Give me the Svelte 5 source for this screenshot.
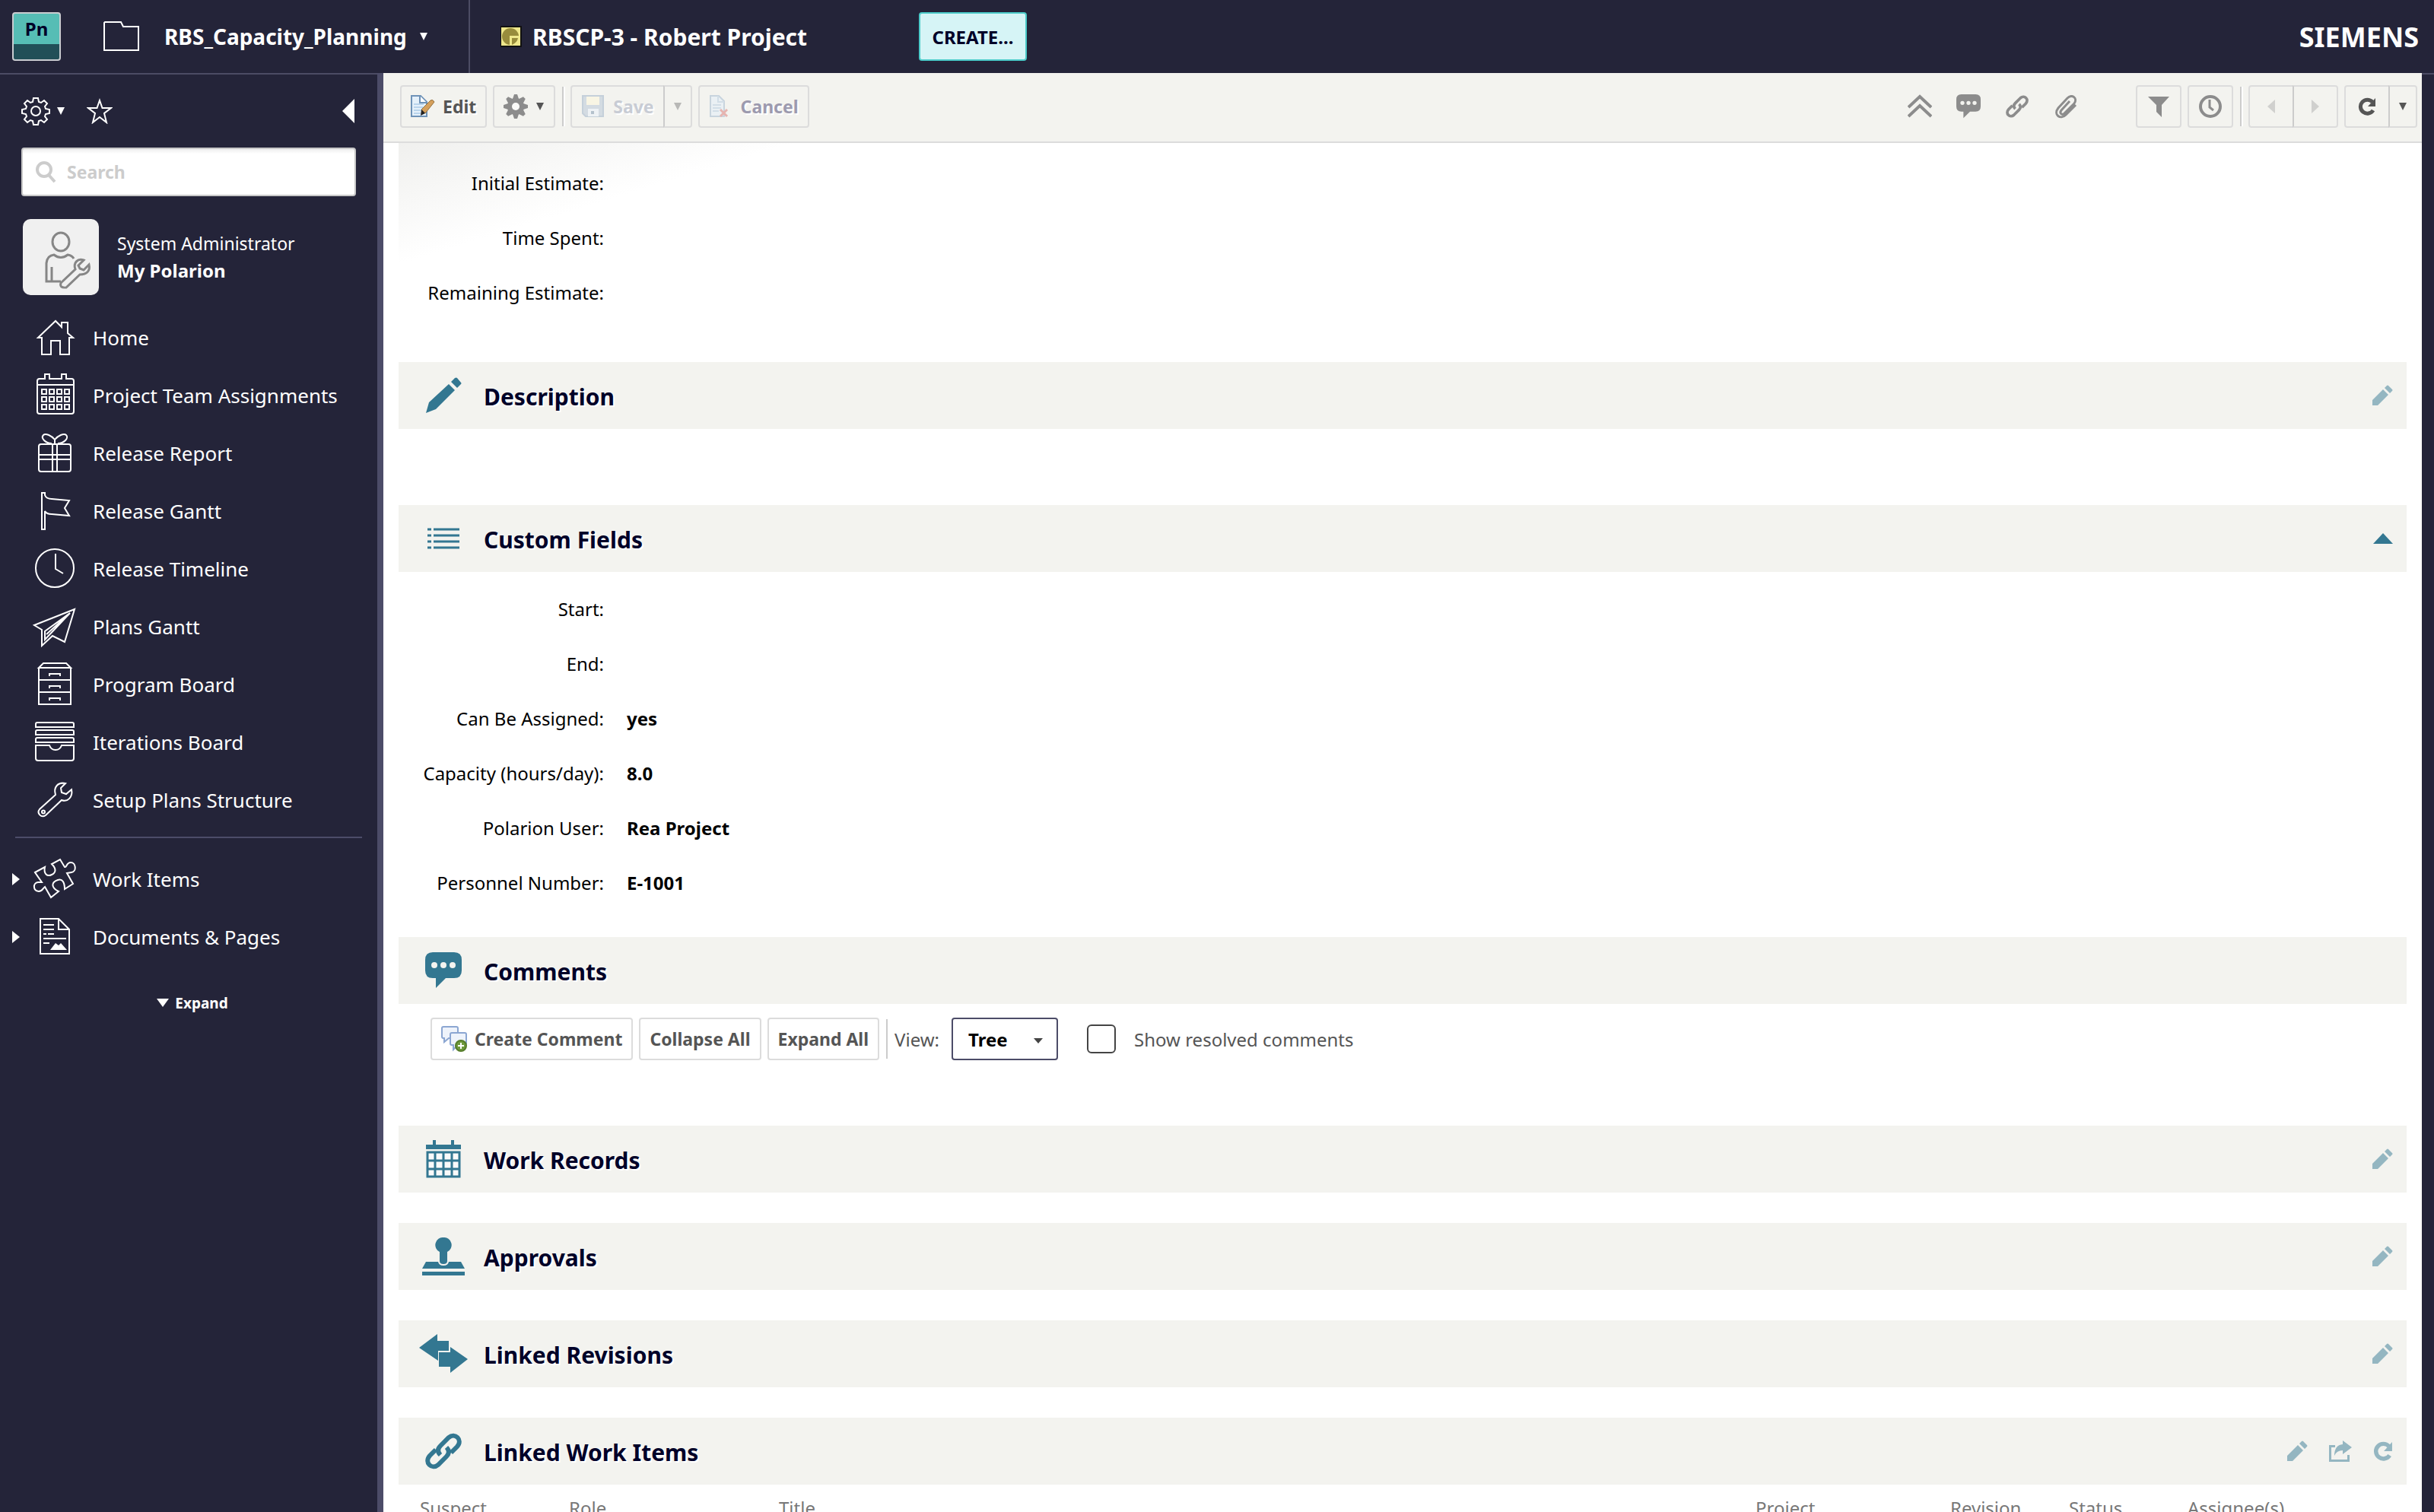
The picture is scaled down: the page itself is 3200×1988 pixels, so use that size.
<script>
  let search = $state('');
  let view = $state('Tree');
  let showResolved = $state(false);
  let fieldsOpen = $state(true);

  // Icons are drawn on a 60x60 grid; `solid` is the filled part.
  const NAV = [
    {
      label: 'Home',
      d: 'M8 30L31 8L39 16V10H47V24L54 30H49V52H37V34H25V52H13V30Z',
    },
    {
      label: 'Project Team Assignments',
      d: 'M10 8H17V2H23V8H39V2H45V8H52Q55 8 55 11V51Q55 54 52 54H10Q7 54 7 51V11Q7 8 10 8ZM7 16H55M13 22h6v6h-6zM23 22h6v6h-6zM33 22h6v6h-6zM43 22h6v6h-6zM13 32h6v6h-6zM23 32h6v6h-6zM33 32h6v6h-6zM43 32h6v6h-6zM13 42h6v6h-6zM23 42h6v6h-6zM33 42h6v6h-6zM43 42h6v6h-6z',
    },
    {
      label: 'Release Report',
      d: 'M12 18H48Q51 18 51 21V51Q51 54 48 54H12Q9 54 9 51V21Q9 18 12 18ZM27 18V54M33 18V54M9 32H51M9 38H51M30 17V12C26 7 18 3 15 6C11 10 18 17 26 17M30 12C34 7 42 3 45 6C49 10 42 17 34 17',
    },
    {
      label: 'Release Gantt',
      d: 'M13 6H17V9Q19 14 26 14L49 16L43 26L49 36L26 34Q19 34 17 30V54H13Z',
    },
    {
      label: 'Release Timeline',
      d: 'M30 4a25 25 0 1 1 0 50a25 25 0 1 1 0-50ZM31 10V30L41 36',
    },
    {
      label: 'Plans Gantt',
      d: 'M56 7L3 28L13 34V55L27 42L43 50ZM50 12L17 36V47ZM50 12L19 40',
    },
    {
      label: 'Program Board',
      d: 'M9 8L15 2H45L51 8ZM9 8V56H51V8M9 24H51M9 40H51M23 19V16H37V19M23 35V32H37V35M23 51V48H37V51',
    },
    {
      label: 'Iterations Board',
      d: 'M5 10V6Q5 4 7 4H53Q55 4 55 6V10ZM5 20V16Q5 14 7 14H53Q55 14 55 16V20ZM5 30V26Q5 24 7 24H53Q55 24 55 26V30ZM5 34H23Q25 40 31 40Q37 40 39 34H55V51Q55 54 52 54H8Q5 54 5 51Z',
    },
    {
      label: 'Setup Plans Structure',
      d: 'M44 8C34 6 28 13 31 23L10 42C6 47 12 54 18 50L39 30C47 33 54 26 52 16L45 22L39 20L38 14ZM15 43.500a2 2 0 1 1 0 4a2 2 0 1 1 0-4Z',
    },
  ];
  const SPACES = [
    {
      label: 'Work Items',
      d: 'M4 21L17 14C15 23 20 27 26 24C32 21 32 16 26 10L37 4L43 14C46 15 45 8 51 8C58 8 59 20 52 21L46 22L54 36L43 43C43 34 40 29 34 31C25 34 25 41 35 46L25 54L17 40C14 42 14 46 9 46C1 45 1 35 8 34L13 34Z',
    },
    {
      label: 'Documents & Pages',
      d: 'M11 6H35L49 20V52H11ZM35 6V20H49M15 14H29M15 20H29M15 26H19M21 26H29M15 32H45M15 38H23',
      solid: 'M24 47L31 38L35 41L38 38L46 47Z',
    },
  ];

  const ESTIMATES = ['Initial Estimate', 'Time Spent', 'Remaining Estimate'];
  const CUSTOM = [
    ['Start', ''],
    ['End', ''],
    ['Can Be Assigned', 'yes'],
    ['Capacity (hours/day)', '8.0'],
    ['Polarion User', 'Rea Project'],
    ['Personnel Number', 'E-1001'],
  ];
  const COLUMNS = ['Suspect', 'Role', 'Title', 'Project', 'Revision', 'Status', 'Assignee(s)'];
</script>

{#snippet navIcon(item)}
  <svg class="nav-icon" viewBox="0 0 60 60">
    <path d={item.d} fill="none" stroke="#fff" stroke-width="2" />
    {#if item.solid}<path d={item.solid} fill="#fff" />{/if}
  </svg>
{/snippet}

{#snippet pencil()}
  <svg width="28" height="28" viewBox="0 0 28 28" fill="currentColor">
    <path d="M1 27V20L15 6L22 13L8 27ZM17 4L20 1Q21 0 22 1L27 6Q28 7 27 8L24 11Z" />
  </svg>
{/snippet}

{#snippet gear()}
  <svg width="32" height="32" viewBox="0 0 32 32">
    <g fill="#8c8c8c">
      {#each [0, 45, 90, 135] as angle}
        <path d="M14 0H18L20 6V26L18 32H14L12 26V6Z" transform="rotate({angle} 16 16)" />
      {/each}
      <circle cx="16" cy="16" r="11" />
    </g>
    <circle cx="16" cy="16" r="5" fill="#fafaf8" />
  </svg>
{/snippet}

{#snippet caret()}
  <svg width="12" height="12" viewBox="0 0 12 12"><path d="M1 1H11L6 11Z" fill="currentColor" /></svg>
{/snippet}

{#snippet bubble(size)}
  <svg width={size} height={size} viewBox="0 0 48 48" fill="currentColor">
    <path fill-rule="evenodd" d="M10 0H38Q48 0 48 10V24Q48 34 38 34H27L14 47V34H10Q0 34 0 24V10Q0 0 10 0ZM12 13a4 4 0 1 0 0 8a4 4 0 1 0 0-8ZM24 13a4 4 0 1 0 0 8a4 4 0 1 0 0-8ZM36 13a4 4 0 1 0 0 8a4 4 0 1 0 0-8Z" />
  </svg>
{/snippet}

{#snippet link(size)}
  <svg width={size} height={size} viewBox="0 0 48 48" fill="none" stroke="currentColor" stroke-width="6">
    <path d="M20 29C15 24 17 20 20 17L31 6C39 -1 50 9 42 18L34 26" />
    <path d="M28 19C33 24 31 28 28 31L17 42C9 49 -2 39 6 30L14 22" />
  </svg>
{/snippet}

{#snippet refresh(size)}
  <svg width={size} height={size} viewBox="0 0 24 24">
    <path d="M19 6A9 9 0 1 0 20 17" fill="none" stroke="currentColor" stroke-width="5" />
    <path d="M23 1V12H13Z" fill="currentColor" />
  </svg>
{/snippet}

{#snippet editAction(label)}
  <button class="icon-btn" aria-label="Edit {label}">{@render pencil()}</button>
{/snippet}

<div class="app">
  <header class="topbar">
    <div class="brand">
      <a class="logo" href="#home">Pn</a>
      <svg width="48" height="40" viewBox="0 0 48 40">
        <path d="M2 1H23L26 7H46V38H1V2Z" fill="none" stroke="#fff" stroke-width="2" />
      </svg>
      <button class="project">RBS_Capacity_Planning {@render caret()}</button>
    </div>
    <div class="item">
      <svg width="28" height="28" viewBox="0 0 28 28">
        <rect width="28" height="28" fill="#111" />
        <rect x="1" y="2" width="25" height="24" fill="#efe88c" />
        <circle cx="13" cy="14" r="11" fill="#988c3c" />
        <path d="M12 13H26V26H12Z" fill="#efe88c" />
        <path d="M15 16H23Q22 22 15 25Z" fill="#988c3c" />
      </svg>
      <h1>RBSCP-3 - Robert Project</h1>
    </div>
    <button class="create">CREATE...</button>
    <span class="siemens">SIEMENS</span>
  </header>

  <div class="body">
    <aside class="sidebar">
      <div class="tools">
        <button class="plain" aria-label="Administration">
          <svg width="38" height="38" viewBox="0 0 38 38" fill="none" stroke="#fff" stroke-width="2">
            <path d="M16 2H22L23 7L26 8L30 5L34 9L31 13L32 16L37 17V22L32 23L31 26L34 30L30 34L26 31L23 32L22 37H16L15 32L12 31L8 34L4 30L7 26L6 23L1 22V17L6 16L7 13L4 9L8 5L12 8L15 7Z" />
            <circle cx="19" cy="19" r="6" />
          </svg>
          {@render caret()}
        </button>
        <button class="plain" aria-label="Favorites">
          <svg width="34" height="34" viewBox="0 0 34 34" fill="none" stroke="#fff" stroke-width="2">
            <path d="M17 3L20.500 13H32L23 20L26 32L17 25L8 32L11 20L2 13H13.500Z" />
          </svg>
        </button>
        <button class="plain collapse" aria-label="Collapse sidebar">
          <svg width="16" height="32" viewBox="0 0 16 32"><path d="M16 0V32L0 16Z" fill="#fff" /></svg>
        </button>
      </div>

      <label class="search">
        <svg width="28" height="30" viewBox="0 0 28 30" fill="none" stroke="#ccc" stroke-width="4">
          <circle cx="12" cy="12" r="9" />
          <path d="M18 19L26 28" />
        </svg>
        <input type="text" placeholder="Search" aria-label="Search" bind:value={search} />
      </label>

      <a class="user" href="#my">
        <svg class="avatar" viewBox="0 0 100 100" fill="none" stroke="#868686" stroke-width="3">
          <rect width="100" height="100" rx="10" fill="#f0f0f0" stroke="none" />
          <ellipse cx="50" cy="30" rx="11" ry="12" />
          <path d="M50 82H31V58Q32 48 41 47Q50 54 59 47Q65 48 67 52M38 63V82" />
          <path d="M80 54C72 51 66 58 69 66L50 84Q48 91 57 90L75 73C84 73 89 68 87 60L80 67L75 65L73 61Z" fill="#f0f0f0" />
        </svg>
        <span class="user-text">
          <span>System Administrator</span>
          <b>My Polarion</b>
        </span>
      </a>

      <nav>
        {#each NAV as item}
          <a class="nav-row" href="#{item.label}">{@render navIcon(item)}{item.label}</a>
        {/each}
        <hr />
        {#each SPACES as item}
          <a class="nav-row" href="#{item.label}">
            <svg class="twisty" width="10" height="16" viewBox="0 0 10 16"><path d="M0 0L10 8L0 16Z" fill="#fff" /></svg>
            {@render navIcon(item)}{item.label}
          </a>
        {/each}
      </nav>
      <button class="expand">
        <svg width="16" height="12" viewBox="0 0 16 12"><path d="M0 0H16L8 11Z" fill="#fff" /></svg>
        Expand
      </button>
    </aside>

    <main>
      <div class="toolbar">
        <button class="btn">
          <svg width="32" height="32" viewBox="0 0 32 32">
            <path d="M1 2H13L21 10V29H1Z" fill="#e4f0fa" stroke="#6f93b8" stroke-width="2" />
            <path d="M12 2V11H21" fill="#fff" stroke="#6f93b8" stroke-width="2" />
            <path d="M4 13H17M4 17H16M4 21H14M4 25H13" stroke="#b9d4ec" stroke-width="2" />
            <path d="M26 8Q29 6 31 10L19 25L14 20Z" fill="#d5a05c" stroke="#94703e" />
            <path d="M14 20L19 25L13 28Z" fill="#222" />
          </svg>
          Edit
        </button>
        <button class="btn" aria-label="Actions">{@render gear()}{@render caret()}</button>
        <span class="sep"></span>
        <div class="group">
          <button class="btn save" disabled>
            <svg width="32" height="32" viewBox="0 0 32 32">
              <path d="M2 2H29V29H6L2 25Z" fill="#d3dbe2" stroke="#c5d0da" stroke-width="2" />
              <path d="M7 3H24V14H7Z" fill="#f8f5e4" />
              <path d="M9 19H23V29H9Z" fill="#eef2f5" />
              <path d="M13 22H17V26H13Z" fill="#b4c1cc" />
            </svg>
            Save
          </button>
          <button class="btn drop" disabled aria-label="Save options">{@render caret()}</button>
        </div>
        <button class="btn cancel" disabled>
          <svg width="32" height="32" viewBox="0 0 32 32">
            <path d="M2 2H13L20 9V29H2Z" fill="#eaf0f4" stroke="#c8d4de" stroke-width="2" />
            <path d="M12 2V10H20M5 14H16M5 18H16M5 22H13" fill="none" stroke="#d2dee7" stroke-width="2" />
            <path d="M15 20L24 29M24 20L15 29" stroke="#e6b4b0" stroke-width="3" />
          </svg>
          Cancel
        </button>

        <div class="links">
          <button class="icon-btn" aria-label="Collapse all sections">
            <svg width="32" height="32" viewBox="0 0 32 32" fill="none" stroke="currentColor" stroke-width="4">
              <path d="M1 17L16 3L31 17M1 29L16 15L31 29" />
            </svg>
          </button>
          <button class="icon-btn" aria-label="Comments">{@render bubble(32)}</button>
          <button class="icon-btn" aria-label="Links">{@render link(30)}</button>
          <button class="icon-btn" aria-label="Attachments">
            <svg width="30" height="32" viewBox="0 0 30 32" fill="none" stroke="currentColor" stroke-width="3">
              <path d="M20 9L9 21C6 25 10 28 13 25L26 12C31 5 23 -1 17 5L5 18C-2 27 8 34 15 27L28 14" />
            </svg>
          </button>
        </div>
        <button class="btn square" aria-label="Filter">
          <svg width="28" height="28" viewBox="0 0 28 28"><path d="M0 1H28L18 12V28L11 21V12Z" fill="#8c8c8c" /></svg>
        </button>
        <button class="btn square" aria-label="History">
          <svg width="32" height="32" viewBox="0 0 32 32" fill="none" stroke="#8c8c8c" stroke-width="4">
            <circle cx="16" cy="16" r="13" />
            <path d="M15 7V17L20 21" stroke-width="3" />
          </svg>
        </button>
        <span class="sep"></span>
        <div class="group">
          <button class="btn square" disabled aria-label="Previous">
            <svg width="10" height="18" viewBox="0 0 10 18"><path d="M10 0V18L0 9Z" fill="#d0d0ce" /></svg>
          </button>
          <button class="btn square" disabled aria-label="Next">
            <svg width="10" height="18" viewBox="0 0 10 18"><path d="M0 0V18L10 9Z" fill="#d0d0ce" /></svg>
          </button>
        </div>
        <div class="group">
          <button class="btn square" aria-label="Refresh">{@render refresh(24)}</button>
          <button class="btn drop" aria-label="Refresh options">{@render caret()}</button>
        </div>
      </div>

      <div class="content">
        <dl class="fields estimates">
          {#each ESTIMATES as name}
            <dt>{name}:</dt><dd></dd>
          {/each}
        </dl>

        <section class="description">
          <div class="head">
            <span class="head-icon">
              <svg width="48" height="48" viewBox="0 0 48 48" fill="currentColor">
                <path d="M1 47L5 33L31 9L39 17L14 42ZM34 6L39 1Q41 0 42 1L47 7Q48 8 47 9L42 14Z" />
              </svg>
            </span>
            <h2>Description</h2>
            {@render editAction('description')}
          </div>
        </section>

        <section class="custom-fields">
          <div class="head">
            <span class="head-icon">
              <svg width="44" height="32" viewBox="0 0 44 32" stroke="currentColor" stroke-width="3">
                <path d="M1 4H6M9 4H43M1 12H6M9 12H43M1 20H6M9 20H43M1 28H6M9 28H43" />
              </svg>
            </span>
            <h2>Custom Fields</h2>
            <button class="icon-btn fold" aria-label="Toggle custom fields" onclick={() => (fieldsOpen = !fieldsOpen)}>
              <svg width="26" height="28" viewBox="0 0 26 28"><path d="M0 21L13 7L26 21Z" fill="currentColor" /></svg>
            </button>
          </div>
          {#if fieldsOpen}
            <dl class="fields custom">
              {#each CUSTOM as [name, value]}
                <dt>{name}:</dt><dd>{value}</dd>
              {/each}
            </dl>
          {/if}
        </section>

        <section class="comments">
          <div class="head">
            <span class="head-icon">{@render bubble(48)}</span>
            <h2>Comments</h2>
          </div>
          <div class="comment-bar">
            <button class="btn">
              <svg width="34" height="34" viewBox="0 0 34 34" stroke="#8ba6d2" stroke-width="2">
                <path d="M3 1H20Q22 1 22 3V14Q22 16 20 16H10L4 21V16H3Q1 16 1 14V3Q1 1 3 1Z" fill="#eef3fb" />
                <path d="M14 9H31Q33 9 33 11V23Q33 25 31 25H22L16 31V25H14Q12 25 12 23V11Q12 9 14 9Z" fill="#eef3fb" />
                <circle cx="26" cy="26" r="7" fill="#6f9a3c" stroke="#557c2b" />
                <path d="M22 26H30M26 22V30" stroke="#fff" />
              </svg>
              Create Comment
            </button>
            <button class="btn">Collapse All</button>
            <button class="btn">Expand All</button>
            <span class="sep"></span>
            <label for="view">View:</label>
            <div class="select">
              <select id="view" bind:value={view}>
                <option>Tree</option>
                <option>Flat</option>
              </select>
              <svg width="12" height="8" viewBox="0 0 12 8"><path d="M0 0H12L6 7Z" fill="#444" /></svg>
            </div>
            <input type="checkbox" id="resolved" bind:checked={showResolved} />
            <label for="resolved">Show resolved comments</label>
          </div>
        </section>

        <section>
          <div class="head">
            <span class="head-icon">
              <svg width="48" height="50" viewBox="0 0 48 50">
                <path d="M10 0H14V6H34V0H38V6H47V12H1V6H10Z" fill="currentColor" />
                <path d="M3 16H45V48H3ZM13 16V48M24 16V48M35 16V48M3 27H45M3 38H45" fill="#fafafa" stroke="currentColor" stroke-width="3" />
              </svg>
            </span>
            <h2>Work Records</h2>
            {@render editAction('work records')}
          </div>
        </section>

        <section>
          <div class="head">
            <span class="head-icon">
              <svg width="56" height="50" viewBox="0 0 56 50" fill="currentColor">
                <path d="M28 0A10 10 0 0 1 33 19V31Q33 35 28 35Q23 35 23 31V19A10 10 0 0 1 28 0Z" />
                <path d="M5 32H21Q22 37 28 37Q34 37 35 32H51L56 41H0ZM0 45H56V50H0Z" />
              </svg>
            </span>
            <h2>Approvals</h2>
            {@render editAction('approvals')}
          </div>
        </section>

        <section>
          <div class="head">
            <span class="head-icon">
              <svg width="64" height="52" viewBox="0 0 64 52" fill="currentColor">
                <path d="M0 18L24 0V9H39V22H25V35Z" />
                <path d="M26 24H41V17L64 33L41 51V43H26Z" />
              </svg>
            </span>
            <h2>Linked Revisions</h2>
            {@render editAction('linked revisions')}
          </div>
        </section>

        <section>
          <div class="head">
            <span class="head-icon">{@render link(48)}</span>
            <h2>Linked Work Items</h2>
            {@render editAction('linked work items')}
            <button class="icon-btn" aria-label="Open in table">
              <svg width="30" height="28" viewBox="0 0 30 28" fill="currentColor">
                <path d="M8 6H0V28H27V19H24V25H3V9H8ZM18 0L30 9L18 18V13Q10 13 7 20Q7 6 18 5Z" />
              </svg>
            </button>
            <button class="icon-btn" aria-label="Refresh linked work items">{@render refresh(26)}</button>
          </div>
          <table>
            <thead>
              <tr>
                {#each COLUMNS as column}
                  <th>{column}</th>
                {/each}
              </tr>
            </thead>
          </table>
        </section>
      </div>
    </main>
  </div>
</div>

<style>
  :global(body) { margin: 0; background: #242439; }
  .app {
    display: flex;
    flex-direction: column;
    height: 100vh;
    overflow: hidden;
    font-family: "Noto Sans", sans-serif;
    font-size: 24px;
    color: #000;
  }
  .app, .app * { box-sizing: border-box; }
  svg { display: block; flex: none; }
  button, input, select {
    font: inherit;
    color: inherit;
    margin: 0;
  }
  button {
    display: flex;
    align-items: center;
    padding: 0;
    border: none;
    background: none;
    cursor: pointer;
  }
  a { color: inherit; text-decoration: none; }

  .topbar {
    display: flex;
    align-items: center;
    height: 96px;
    flex: none;
    padding-right: 20px;
    background: #242439;
    color: #fff;
  }
  .brand {
    display: flex;
    align-items: center;
    width: 618px;
    height: 100%;
    padding-left: 16px;
    border-right: 2px solid #4c4c64;
  }
  .logo {
    width: 64px;
    height: 64px;
    margin-right: 56px;
    border: 2px solid #c9ccd0;
    border-radius: 4px;
    background: linear-gradient(#56bdb5 40px, #214f58 40px);
    color: #000028;
    font-size: 24px;
    font-weight: 700;
    line-height: 40px;
    text-align: center;
  }
  .project {
    gap: 16px;
    margin-left: 32px;
    font-size: 28px;
    font-weight: 700;
  }
  .item {
    display: flex;
    align-items: center;
    gap: 14px;
    width: 590px;
    padding-left: 40px;
  }
  h1 { margin: 0; font-size: 30px; font-weight: 700; }
  .create {
    justify-content: center;
    width: 142px;
    height: 64px;
    border: 2px solid #4ccbc9;
    border-radius: 4px;
    background: #d6f4f6;
    color: #000028;
    font-size: 24px;
    font-weight: 700;
  }
  .siemens {
    margin-left: auto;
    font-size: 36px;
    font-weight: 700;
  }

  .body {
    display: flex;
    flex: 1;
    min-height: 0;
    padding-right: 16px;
    background: linear-gradient(#4c4c64 2px, #242439 2px);
  }
  .sidebar {
    width: 504px;
    flex: none;
    border-right: 8px solid #4c4c68;
    padding-top: 30px;
    color: #fff;
  }
  .tools {
    display: flex;
    align-items: center;
    gap: 28px;
    height: 40px;
    padding: 0 30px 0 28px;
  }
  .plain { gap: 8px; }
  .collapse { margin-left: auto; }
  .search {
    display: flex;
    align-items: center;
    gap: 14px;
    height: 64px;
    margin: 28px 28px 30px;
    padding: 0 16px;
    border: 2px solid #c8c8c8;
    border-radius: 4px;
    background: linear-gradient(#eee, #fff 6px);
  }
  .search input {
    flex: 1;
    min-width: 0;
    padding: 0;
    border: none;
    outline: none;
    background: none;
    color: #333;
    font-size: 23px;
    font-weight: 700;
  }
  .search input::placeholder { color: #ccc; opacity: 1; }
  .user {
    display: flex;
    align-items: center;
    gap: 24px;
    height: 100px;
    margin: 0 30px 18px;
  }
  .avatar { width: 100px; height: 100px; }
  .user-text {
    display: flex;
    flex-direction: column;
    font-size: 23px;
    line-height: 36px;
  }
  .user-text b { font-size: 24px; }
  .nav-row {
    display: flex;
    align-items: center;
    gap: 20px;
    position: relative;
    height: 76px;
    padding-left: 42px;
    font-size: 26px;
  }
  .nav-icon { width: 60px; height: 60px; }
  .twisty { position: absolute; left: 16px; }
  hr {
    height: 2px;
    margin: 10px 20px 16px;
    border: none;
    background: #4c4c68;
  }
  .expand {
    gap: 8px;
    margin: 36px auto 0;
    padding-left: 10px;
    font-size: 19px;
    font-weight: 700;
  }

  main {
    display: flex;
    flex-direction: column;
    flex: 1;
    min-width: 0;
    background: #fff;
  }
  .toolbar {
    display: flex;
    flex: none;
    align-items: center;
    gap: 8px;
    height: 92px;
    padding: 0 6px 2px 22px;
    border-bottom: 2px solid #dcdcdc;
    background: #f3f3ef;
  }
  .btn {
    justify-content: center;
    gap: 10px;
    height: 56px;
    padding: 0 12px;
    border: 2px solid #dcdcdc;
    border-radius: 4px;
    color: #555;
    font-size: 23px;
    font-weight: 700;
    white-space: nowrap;
    text-shadow: 2px 2px 0 #fff;
  }
  .btn:disabled { color: #b8b8b6; cursor: default; }
  .btn.save { color: #c8ccd4; }
  .btn.cancel { color: #9c9aae; }
  .square { width: 60px; padding: 0; }
  .drop { width: 38px; padding: 0; }
  .group { display: flex; }
  .group .btn:first-child { border-radius: 4px 0 0 4px; }
  .group .btn + .btn {
    margin-left: -2px;
    border-left-color: #ccc;
    border-radius: 0 4px 4px 0;
  }
  .sep {
    width: 2px;
    height: 52px;
    margin: 0 1px;
    background: #ccc;
    box-shadow: 2px 0 #fff;
  }
  .icon-btn { color: #94b6c1; }
  .links {
    display: flex;
    align-items: center;
    gap: 32px;
    margin: 0 68px 0 auto;
  }
  .links .icon-btn {
    justify-content: center;
    width: 32px;
    color: #8c8c8c;
  }

  .content {
    flex: 1;
    min-height: 0;
    overflow: hidden;
    padding: 0 20px;
  }
  .fields {
    display: grid;
    grid-template-columns: 270px 1fr;
    grid-auto-rows: 72px;
    column-gap: 30px;
    align-items: center;
    margin: 0;
  }
  dt { text-align: right; }
  dd { margin: 0; font-weight: 700; }
  .estimates {
    padding: 16px 0 56px;
    background: linear-gradient(to bottom right, #f0f0ee, #fff 50%) no-repeat 0 0 / 520px 160px;
  }
  .custom { padding-top: 12px; }
  section { margin-bottom: 40px; }
  section.description { margin-bottom: 100px; }
  section.custom-fields { margin-bottom: 36px; }
  .head {
    display: flex;
    align-items: center;
    gap: 28px;
    height: 88px;
    padding-right: 18px;
    background: #f3f3ef;
  }
  .head-icon {
    display: flex;
    justify-content: center;
    width: 118px;
    margin-right: -34px;
    color: #337791;
  }
  h2 {
    flex: 1;
    margin: 0;
    padding-top: 2px;
    color: #000028;
    font-size: 30px;
    font-weight: 700;
    text-shadow: 2px 2px 0 #fff;
  }
  .icon-btn.fold { color: #337791; }
  section.comments { margin-bottom: 86px; }
  .comment-bar {
    display: flex;
    align-items: center;
    gap: 8px;
    padding: 18px 0 0 42px;
    color: #555;
  }
  .select { position: relative; margin: 0 30px 0 8px; }
  .select select {
    width: 140px;
    height: 56px;
    padding: 0 20px;
    border: 2px solid #4c4c68;
    border-radius: 4px;
    background: #fff;
    color: #000;
    font-weight: 700;
    appearance: none;
  }
  .select svg { position: absolute; right: 20px; top: 27px; pointer-events: none; }
  input[type='checkbox'] {
    width: 38px;
    height: 38px;
    margin-right: 16px;
    border: 2px solid #444;
    border-radius: 6px;
    background: #fff;
    appearance: none;
  }
  input[type='checkbox']:checked { background: #337791; }
  table {
    width: 100%;
    table-layout: fixed;
    border-collapse: collapse;
  }
  th {
    padding: 14px 0 0 28px;
    color: #777;
    font-weight: 400;
    text-align: left;
  }
  th:nth-child(1) { width: 196px; }
  th:nth-child(2) { width: 276px; }
  th:nth-child(4) { width: 256px; }
  th:nth-child(5) { width: 156px; }
  th:nth-child(6) { width: 156px; }
  th:nth-child(7) { width: 316px; }
</style>
